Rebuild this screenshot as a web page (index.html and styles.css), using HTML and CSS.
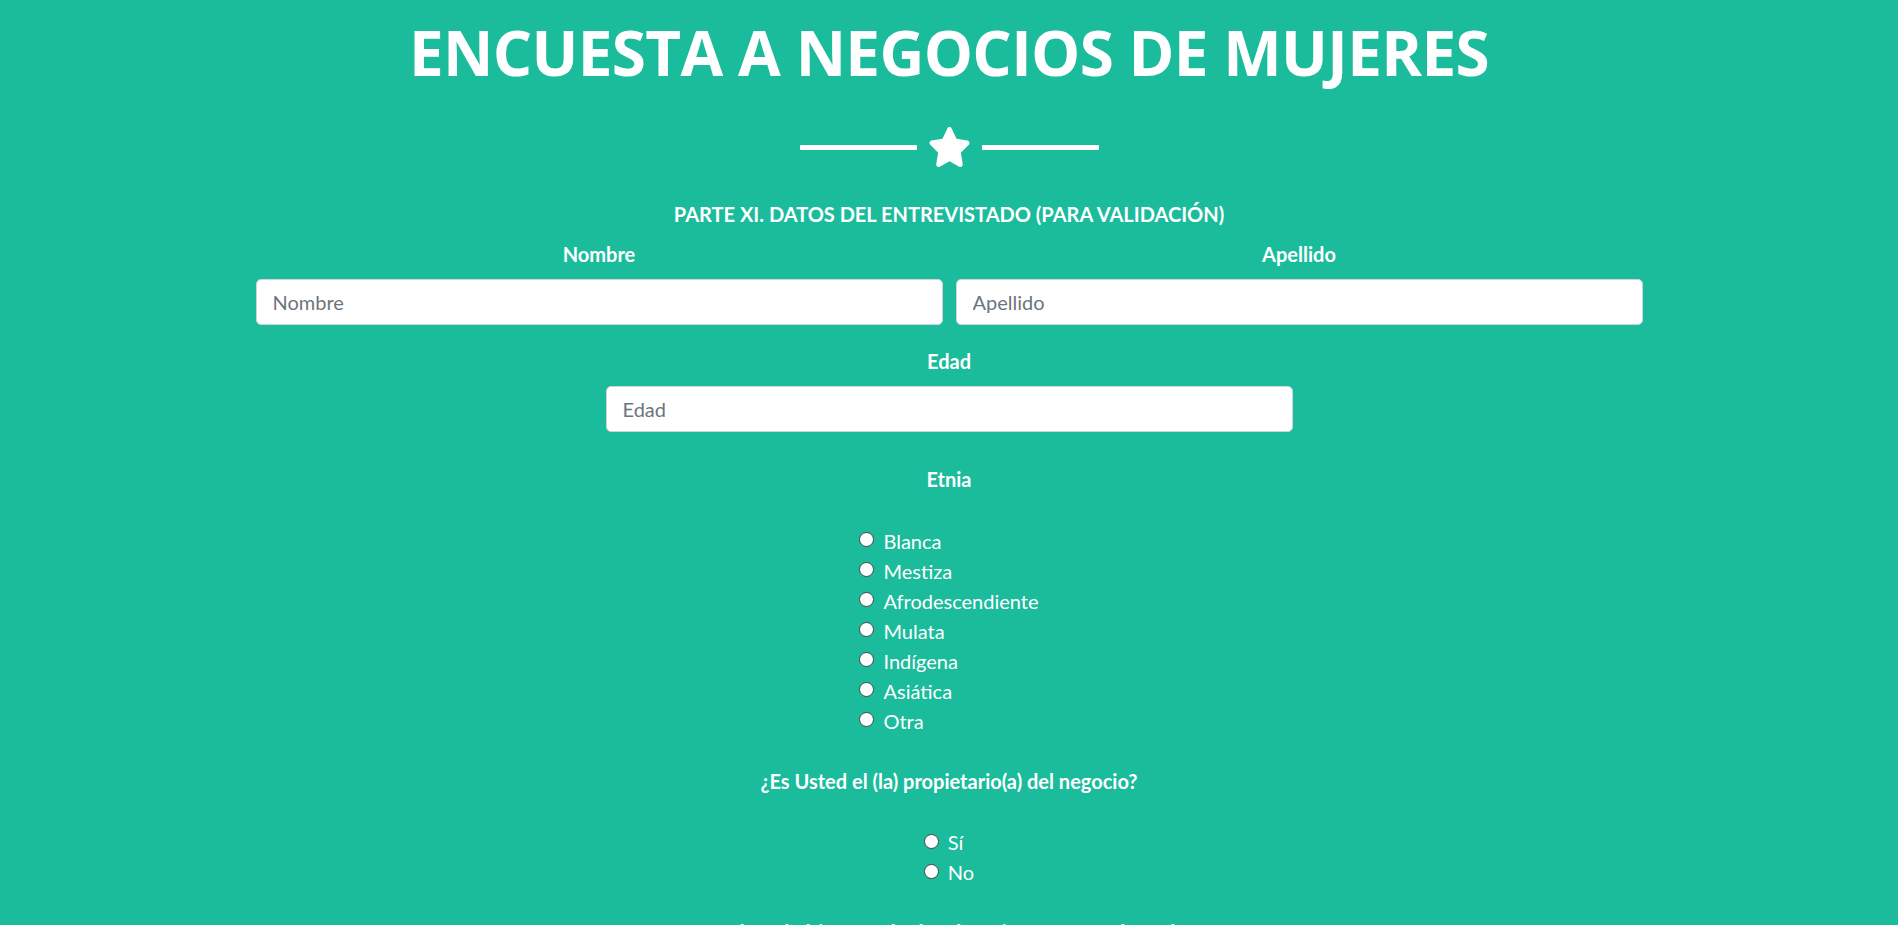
FILE: index.html
```html
<!DOCTYPE html>
<html lang="es">
<head>
<meta charset="utf-8">
<title>Encuesta a negocios de mujeres</title>
<link rel="stylesheet" href="styles.css">
</head>
<body>
<header class="masthead">
  <h1 class="masthead-heading">ENCUESTA A NEGOCIOS DE MUJERES</h1>
  <div class="divider">
    <span class="divider-line"></span>
    <svg class="divider-star" viewBox="0 0 576 512" preserveAspectRatio="none" aria-hidden="true"><path fill="#fff" d="M259.3 17.8L194 150.2 47.9 171.5c-26.2 3.8-36.7 36.1-17.7 54.6l105.7 103-25 145.5c-4.5 26.3 23.2 46 46.4 33.7L288 439.6l130.7 68.7c23.2 12.2 50.9-7.4 46.4-33.7l-25-145.5 105.7-103c19-18.5 8.5-50.8-17.7-54.6L382 150.2 316.7 17.8c-11.7-23.6-45.6-23.9-57.4 0z"/></svg>
    <span class="divider-line"></span>
  </div>
</header>
<main class="survey">
  <h2 class="section-title">PARTE XI. DATOS DEL ENTREVISTADO (PARA VALIDACIÓN)</h2>
  <div class="name-row">
    <div class="field">
      <label class="field-label" for="nombre">Nombre</label>
      <input class="form-control" id="nombre" type="text" placeholder="Nombre">
    </div>
    <div class="field">
      <label class="field-label" for="apellido">Apellido</label>
      <input class="form-control" id="apellido" type="text" placeholder="Apellido">
    </div>
  </div>
  <div class="field field-single">
    <label class="field-label" for="edad">Edad</label>
    <input class="form-control" id="edad" type="text" placeholder="Edad">
  </div>
  <div class="question question-first">
    <p class="question-label">Etnia</p>
    <div class="options">
      <label class="option"><input type="radio" name="etnia"> <span>Blanca</span></label>
      <label class="option"><input type="radio" name="etnia"> <span>Mestiza</span></label>
      <label class="option"><input type="radio" name="etnia"> <span>Afrodescendiente</span></label>
      <label class="option"><input type="radio" name="etnia"> <span>Mulata</span></label>
      <label class="option"><input type="radio" name="etnia"> <span>Indígena</span></label>
      <label class="option"><input type="radio" name="etnia"> <span>Asiática</span></label>
      <label class="option"><input type="radio" name="etnia"> <span>Otra</span></label>
    </div>
  </div>
  <div class="question">
    <p class="question-label">¿Es Usted el (la) propietario(a) del negocio?</p>
    <div class="options">
      <label class="option"><input type="radio" name="propietario"> <span>Sí</span></label>
      <label class="option"><input type="radio" name="propietario"> <span>No</span></label>
    </div>
  </div>
  <div class="question">
    <p class="question-label">¿Cuál es el último grado de educación que Usted aprobó?</p>
  </div>
</main>
</body>
</html>
```
FILE: styles.css
```css
* { box-sizing: border-box; }
html, body { margin: 0; padding: 0; }
body {
  background: #1abc9c;
  color: #fff;
  font-family: Lato, "Open Sans", sans-serif;
  font-size: 20px;
  line-height: 1.5;
  min-height: 100vh;
}
.masthead { padding-top: 21px; text-align: center; }
.masthead-heading {
  margin: 0;
  font-family: "Open Sans", sans-serif;
  font-weight: 700;
  font-size: 62px;
  line-height: 1;
  letter-spacing: -0.67px;
  display: inline-block;
}
.divider {
  margin-top: 44px;
  display: flex;
  justify-content: center;
  align-items: center;
  gap: 11px;
  height: 40px;
}
.divider-line { width: 117px; height: 5px; background: #fff; border-radius: 1px; }
.divider-star { width: 43px; height: 40px; display: block; }
.survey { max-width: 1387px; margin: 0 auto; text-align: center; }
.section-title {
  margin: 32px 0 0;
  font-size: 20px;
  line-height: 30px;
  font-weight: 700;
}
.name-row {
  margin-top: 10px;
  display: grid;
  grid-template-columns: 1fr 1fr;
  gap: 13px;
}
.field { display: flex; flex-direction: column; align-items: center; }
.field-single { width: 687px; margin: 21px auto 0; }
.field-label {
  font-size: 20px;
  line-height: 30px;
  font-weight: 700;
  margin-bottom: 10px;
}
.form-control {
  width: 100%;
  height: 46px;
  padding: 10px 16px;
  font-family: Lato, sans-serif;
  font-size: 20px;
  line-height: 24px;
  color: #495057;
  background: #fff;
  border: 1px solid #ced4da;
  border-radius: 5px;
  outline: none;
}
.form-control::placeholder { color: #6c757d; opacity: 1; }
.question { margin-top: 30px; }
.question-first { margin-top: 32px; }
.question-label {
  margin: 0 0 30px;
  font-size: 20px;
  line-height: 30px;
  font-weight: 700;
}
.options { display: inline-flex; flex-direction: column; align-items: flex-start; }
.option { display: flex; align-items: center; height: 30px; font-size: 20px; line-height: 30px; }
.option input {
  -webkit-appearance: none;
  appearance: none;
  width: 15px;
  height: 15px;
  margin: -2px 9px 0 0;
  border: 1px solid #444;
  border-radius: 50%;
  background: #fff;
}
```
